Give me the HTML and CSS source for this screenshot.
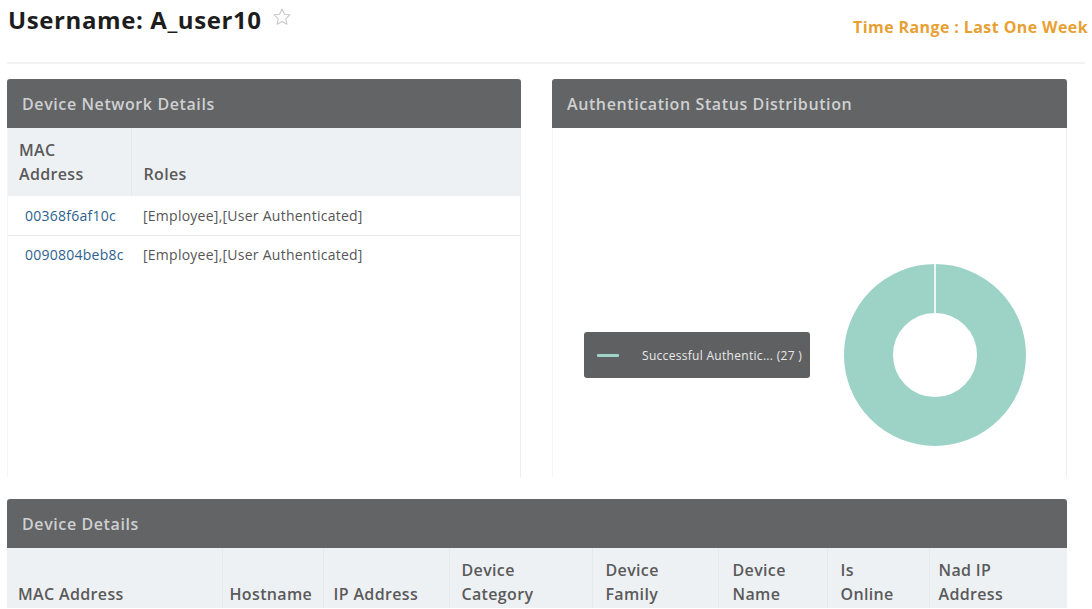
FILE: index.html
```html
<!DOCTYPE html>
<html>
<head>
<meta charset="utf-8">
<link rel="stylesheet" href="styles.css">
</head>
<body>
<div class="page">
  <div class="topbar">
    <h1 class="title">Username: A_user10
      <svg class="star" width="20" height="20" viewBox="0 0 24 24"><path d="M12 2.5l2.9 6.1 6.6.8-4.9 4.6 1.3 6.6L12 17.3l-5.9 3.3 1.3-6.6-4.9-4.6 6.6-.8z" fill="none" stroke="#c9c9c9" stroke-width="1.3" stroke-linejoin="round"/></svg>
    </h1>
    <div class="range">Time Range : Last One Week</div>
  </div>
  <div class="divider"></div>

  <div class="grid">
    <section class="panel">
      <div class="panel-head">Device Network Details</div>
      <div class="panel-body">
        <table class="tbl net">
          <thead>
            <tr><th class="c-mac">MAC<br>Address</th><th>Roles</th></tr>
          </thead>
          <tbody>
            <tr><td class="link">00368f6af10c</td><td>[Employee],[User Authenticated]</td></tr>
            <tr class="last"><td class="link">0090804beb8c</td><td>[Employee],[User Authenticated]</td></tr>
          </tbody>
        </table>
      </div>
    </section>

    <section class="panel">
      <div class="panel-head">Authentication Status Distribution</div>
      <div class="panel-body chart">
        <div class="legend">
          <span class="swatch"></span>
          <span class="legend-text">Successful Authentic... (27 )</span>
        </div>
        <svg class="donut" width="182" height="182" viewBox="0 0 182 182">
          <circle cx="91" cy="91" r="66.5" fill="none" stroke="#9dd3c6" stroke-width="49"/>
          <line x1="91" y1="0" x2="91" y2="49" stroke="#ffffff" stroke-width="1.6"/>
        </svg>
      </div>
    </section>
  </div>

  <section class="panel wide">
    <div class="panel-head">Device Details</div>
    <table class="tbl dev">
      <thead>
        <tr>
          <th class="d1">MAC Address</th>
          <th class="d2">Hostname</th>
          <th class="d3">IP Address</th>
          <th class="d4">Device<br>Category</th>
          <th class="d5">Device<br>Family</th>
          <th class="d6">Device<br>Name</th>
          <th class="d7">Is<br>Online</th>
          <th class="d8">Nad IP<br>Address</th>
        </tr>
      </thead>
    </table>
  </section>
</div>
</body>
</html>
```

FILE: styles.css
```css
* { box-sizing: border-box; }
html, body { margin: 0; padding: 0; background: #fff; }
body { font-family: "Open Sans", "DejaVu Sans", sans-serif; color: #555; overflow: hidden; }

.page { width: 1092px; height: 609px; padding: 0 0 0 7px; }

.topbar { display: flex; justify-content: space-between; align-items: flex-start; height: 62px; padding-right: 4px; }
.title { margin: 0; padding-top: 2px; font-size: 24px; font-weight: 700; color: #1d1d1d; letter-spacing: 0.6px; display: flex; align-items: center; gap: 10px; line-height: 36px; padding-left: 1px; }
.star { margin-top: -6px; }
.range { color: #e9a032; font-weight: 700; font-size: 16px; letter-spacing: 0.4px; padding-top: 16px; }

.divider { height: 2px; background: #f3f3f3; width: 1078px; margin-bottom: 15px; }

.grid { display: grid; grid-template-columns: 514px 515px; column-gap: 31px; width: 1060px; }

.panel { display: flex; flex-direction: column; }
.panel-head { height: 49px; background: #626466; color: #cfd0d1; font-weight: 600; font-size: 16px; letter-spacing: 0.6px; padding-left: 15px; display: flex; align-items: center; border-radius: 3px 3px 0 0; }
.panel-body { height: 349px; border-right: 1px solid #eeeeee; border-left: 1px solid #f6f6f6; }

.tbl { border-collapse: collapse; width: 100%; }
.tbl th { background: #eef1f4; text-align: left; font-weight: 600; font-size: 16px; letter-spacing: 0.35px; color: #5a5a5a; line-height: 24px; vertical-align: bottom; white-space: nowrap; }
.net th { padding: 10px 10px 10px 11px; height: 68px; }
.net th.c-mac { width: 123px; border-right: 1px solid #e6e9ec; }
.net th + th { padding-left: 12px; }
.net td { font-size: 14px; letter-spacing: 0.25px; height: 39px; padding: 0 0 0 12px; border-bottom: 1px solid #e7e7e7; color: #555; white-space: nowrap; }
.net tr.last td { border-bottom: none; }
.net td + td { padding-left: 12px; }
.net td.link { color: #2d5f8e; padding-left: 17px; }

.chart { display: flex; align-items: flex-start; padding: 136px 0 0 31px; }
.legend { width: 226px; height: 46px; background: #5f6062; border-radius: 3px; display: flex; align-items: center; margin-top: 68px; margin-right: 34px; }
.swatch { width: 22px; height: 3px; background: #9fd3c7; margin-left: 13px; margin-right: 23px; border-radius: 1px; }
.legend-text { color: #e9e9e9; font-size: 12px; letter-spacing: 0.3px; white-space: nowrap; }
.donut { display: block; }

.wide { width: 1060px; margin-top: 22px; }
.dev th { height: 60px; padding: 10px 8px 0 9px; vertical-align: top; border-right: 1px solid #e6e9ec; }
.dev th.d1, .dev th.d2, .dev th.d3 { padding-top: 34px; }
.dev th.d8 { border-right: none; }
.dev .d1 { width: 215px; padding-left: 11px; }
.dev .d2 { width: 101px; padding-left: 7px; }
.dev .d3 { width: 126px; padding-left: 10px; }
.dev .d4 { width: 143px; padding-left: 12px; }
.dev .d5 { width: 126px; padding-left: 13px; }
.dev .d6 { width: 109px; padding-left: 14px; }
.dev .d7 { width: 102px; padding-left: 13px; }
```
